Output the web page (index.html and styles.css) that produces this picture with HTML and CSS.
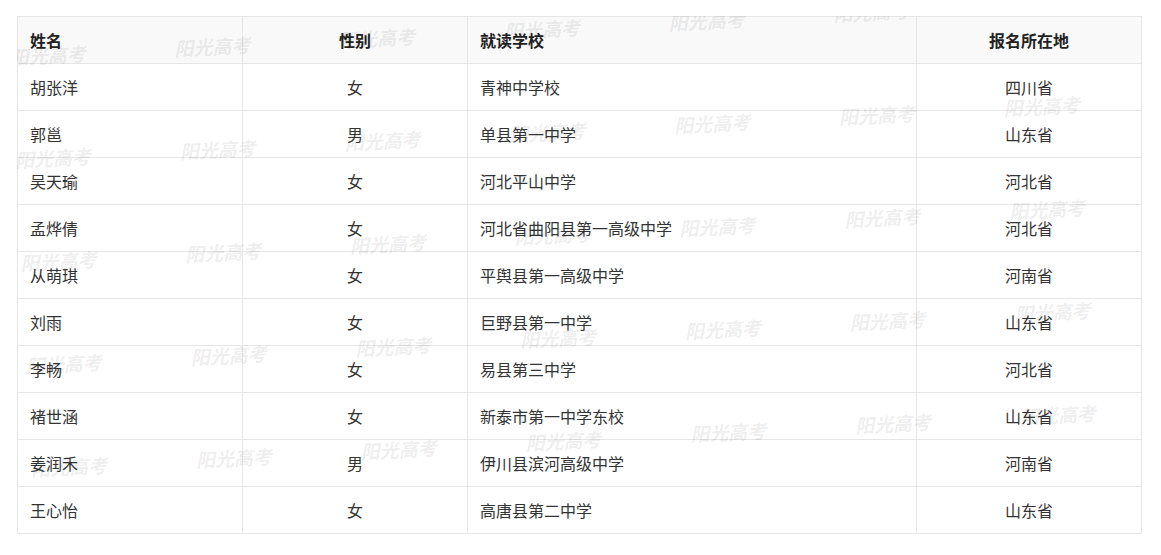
FILE: index.html
```html
<!DOCTYPE html>
<html lang="zh-CN">
<head>
<meta charset="utf-8">
<title>名单</title>
<link rel="stylesheet" href="styles.css">
</head>
<body>
<div class="page">
  <div class="table-wrap">
    <div class="grid">
      <div class="cell head">姓名</div>
      <div class="cell head center">性别</div>
      <div class="cell head">就读学校</div>
      <div class="cell head center">报名所在地</div>

      <div class="cell">胡张洋</div><div class="cell center">女</div><div class="cell">青神中学校</div><div class="cell center">四川省</div>
      <div class="cell">郭邕</div><div class="cell center">男</div><div class="cell">单县第一中学</div><div class="cell center">山东省</div>
      <div class="cell">吴天瑜</div><div class="cell center">女</div><div class="cell">河北平山中学</div><div class="cell center">河北省</div>
      <div class="cell">孟烨倩</div><div class="cell center">女</div><div class="cell">河北省曲阳县第一高级中学</div><div class="cell center">河北省</div>
      <div class="cell">从萌琪</div><div class="cell center">女</div><div class="cell">平舆县第一高级中学</div><div class="cell center">河南省</div>
      <div class="cell">刘雨</div><div class="cell center">女</div><div class="cell">巨野县第一中学</div><div class="cell center">山东省</div>
      <div class="cell">李畅</div><div class="cell center">女</div><div class="cell">易县第三中学</div><div class="cell center">河北省</div>
      <div class="cell">褚世涵</div><div class="cell center">女</div><div class="cell">新泰市第一中学东校</div><div class="cell center">山东省</div>
      <div class="cell">姜润禾</div><div class="cell center">男</div><div class="cell">伊川县滨河高级中学</div><div class="cell center">河南省</div>
      <div class="cell">王心怡</div><div class="cell center">女</div><div class="cell">高唐县第二中学</div><div class="cell center">山东省</div>
    </div>
    <div class="wm-layer" aria-hidden="true">
      <div class="wm-grid">
        <div class="wm-row"><span>阳光高考</span><span>阳光高考</span><span>阳光高考</span><span>阳光高考</span><span>阳光高考</span><span>阳光高考</span><span>阳光高考</span></div>
        <div class="wm-row"><span>阳光高考</span><span>阳光高考</span><span>阳光高考</span><span>阳光高考</span><span>阳光高考</span><span>阳光高考</span><span>阳光高考</span></div>
        <div class="wm-row"><span>阳光高考</span><span>阳光高考</span><span>阳光高考</span><span>阳光高考</span><span>阳光高考</span><span>阳光高考</span><span>阳光高考</span></div>
        <div class="wm-row"><span>阳光高考</span><span>阳光高考</span><span>阳光高考</span><span>阳光高考</span><span>阳光高考</span><span>阳光高考</span><span>阳光高考</span></div>
        <div class="wm-row"><span>阳光高考</span><span>阳光高考</span><span>阳光高考</span><span>阳光高考</span><span>阳光高考</span><span>阳光高考</span><span>阳光高考</span></div>
      </div>
    </div>
  </div>
</div>
</body>
</html>
```
FILE: styles.css
```css
* { box-sizing: border-box; }

html, body {
  margin: 0;
  padding: 0;
  background: #ffffff;
}

body {
  font-family: "Noto Sans CJK SC", "Liberation Sans", sans-serif;
  font-size: 16px;
  color: #333333;
}

.page {
  padding: 16px 0 0 17px;
}

.table-wrap {
  position: relative;
  width: max-content;
  overflow: hidden;
}

.grid {
  display: grid;
  grid-template-columns: 225px 225px 449px 225px;
  grid-auto-rows: 47px;
  border-top: 1px solid #e6e6e6;
  border-left: 1px solid #e6e6e6;
}

.cell {
  display: flex;
  align-items: center;
  padding: 0 12px;
  border-right: 1px solid #e6e6e6;
  border-bottom: 1px solid #e6e6e6;
  line-height: 20px;
  white-space: nowrap;
}

.cell.center {
  justify-content: center;
}

.cell.head {
  background: #f9f9f9;
  font-weight: 700;
  color: #222222;
}

.wm-layer {
  position: absolute;
  inset: 0;
  overflow: hidden;
  pointer-events: none;
}

.wm-grid {
  position: absolute;
  left: -8px;
  top: 30px;
  transform-origin: 0 0;
  transform: rotate(-3deg);
  display: flex;
  flex-direction: column;
  row-gap: 81px;
}

.wm-row {
  display: flex;
  column-gap: 89px;
  height: 22px;
}

.wm-row span {
  display: block;
  width: 76px;
  font-size: 19px;
  line-height: 22px;
  font-weight: 700;
  font-style: italic;
  font-family: "Noto Sans CJK SC", sans-serif;
  color: rgba(0, 0, 0, 0.085);
  white-space: nowrap;
}
```
